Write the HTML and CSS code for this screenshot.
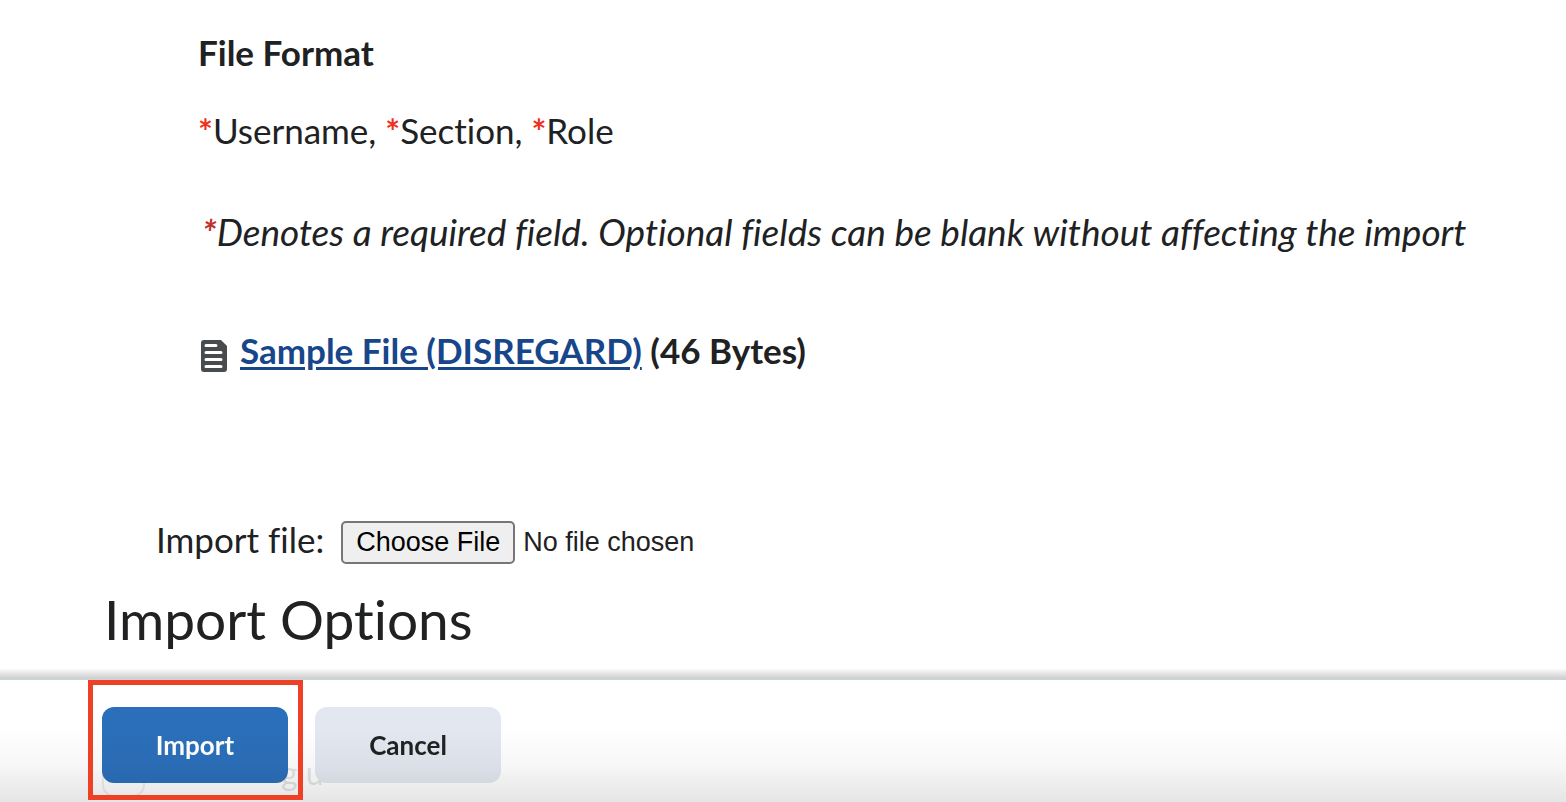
FILE: index.html
```html
<!doctype html>
<html lang="en">
  <head>
    <meta charset="utf-8">
    <meta name="viewport" content="width=device-width, initial-scale=1">
    <title>Import</title>
    <link rel="stylesheet" href="styles.css">
  </head>
  <body>
    <form class="page">
      <div class="format">
        <h3 class="format-title">File Format</h3>
        <p class="fields"><span class="req">*</span>Username, <span class="req">*</span>Section, <span class="req">*</span>Role</p>
        <p class="note"><em><span class="req req-dark">*</span>Denotes a required field. Optional fields can be blank without affecting the import</em></p>
        <div class="sample">
          <svg class="file-icon" width="26" height="32" viewBox="0 0 26 32" aria-hidden="true">
            <path fill="#494c4e" d="M3 0h17l6 6v23a3 3 0 0 1-3 3H3a3 3 0 0 1-3-3V3a3 3 0 0 1 3-3z"/>
            <path stroke="#fff" stroke-width="3" stroke-linecap="round" d="M5 5.500h10M5 12.500h15M5 19.500h15M5 26.500h15"/>
          </svg>
          <span><a href="#">Sample File (DISREGARD)</a> (46 Bytes)</span>
        </div>
      </div>

      <div class="import-row">
        <label for="file">Import file:</label>
        <input type="file" id="file" class="file-input">
      </div>

      <h2 class="options-title">Import Options</h2>
      <div class="option">
        <input type="checkbox" id="option" class="check">
        <label for="option">g u</label>
      </div>
    </form>

    <footer class="actions">
      <div class="marked">
        <button type="submit" class="btn btn-primary">Import</button>
      </div>
      <button type="button" class="btn">Cancel</button>
    </footer>
  </body>
</html>
```
FILE: styles.css
```css
body {
    margin: 0;
    height: 100vh;
    overflow: hidden;
    background-color: #fff;
    color: #202122;
    font-family: Lato, "Liberation Sans", sans-serif;
    font-size: 35px;
    font-variant-ligatures: none;
    line-height: 48px;
}
h2, h3, p {
    margin: 0;
}
.page {
    padding: 28px 24px 0 104px;
}
.format {
    padding-left: 94px;
}
.format-title {
    font-size: 35px;
    font-weight: 700;
}
.fields {
    margin-top: 30px;
}
.note {
    margin-top: 54px;
    padding-left: 4px;
    font-size: 37px;
}
.req {
    color: #f0301e;
    font-weight: 700;
}
.req-dark {
    color: #c1302a;
}
.sample {
    display: flex;
    align-items: center;
    gap: 13px;
    margin-top: 70px;
    padding-left: 3px;
    font-weight: 700;
}
.file-icon {
    flex: none;
    margin-top: 12px;
}
a {
    color: #17468a;
    text-decoration-thickness: 3px;
    text-underline-offset: 3px;
}
.import-row {
    display: flex;
    align-items: center;
    gap: 17px;
    margin-top: 140px;
    padding-left: 52px;
}
.file-input {
    flex: 1;
    min-width: 0;
    padding-top: 6px;
    color: #202122;
    font-family: "Liberation Sans", Arial, sans-serif;
    font-size: 27px;
    line-height: 44px;
}
.file-input::file-selector-button {
    height: 43px;
    margin: 0 8px 0 0;
    padding: 0 13px;
    border: 2px solid #767676;
    border-radius: 5px;
    background-color: #efefef;
    color: #000;
    font: inherit;
    line-height: 36px;
}
.options-title {
    margin-top: 20px;
    font-size: 55px;
    font-weight: 400;
    line-height: 70px;
}
.option {
    display: flex;
    align-items: center;
    gap: 136px;
    margin-top: 100px;
    margin-left: -2px;
}
.check {
    appearance: none;
    box-sizing: border-box;
    width: 43px;
    height: 43px;
    margin: 0;
    border: 2px solid #6e7376;
    border-radius: 12px;
}
.option label {
    margin-top: -6px;
    font-size: 32px;
}

/* sticky action bar over the form */
.actions {
    position: fixed;
    right: 0;
    bottom: 0;
    left: 0;
    display: flex;
    gap: 27px;
    padding: 27px 102px 19px;
    background-color: rgba(255, 255, 255, .88);
}
.actions::before {
    content: "";
    position: absolute;
    right: 0;
    bottom: 100%;
    left: 0;
    height: 10px;
    border-bottom: 2px solid #cbd3d6;
    background: linear-gradient(rgba(0, 0, 0, 0), rgba(0, 0, 0, .18)) padding-box;
}
.actions::after {
    content: "";
    position: absolute;
    right: 0;
    bottom: 0;
    left: 0;
    height: 76px;
    background: linear-gradient(rgba(0, 0, 0, 0), rgba(0, 0, 0, .03) 50%, rgba(0, 0, 0, .1));
    pointer-events: none;
}
.marked {
    position: relative;
    display: flex;
}
.marked::after {
    content: "";
    position: absolute;
    z-index: 1;
    top: -27px;
    right: -15px;
    bottom: -17px;
    left: -14px;
    border: 5px solid #ee4026;
    pointer-events: none;
}
.btn {
    width: 186px;
    height: 76px;
    padding: 0;
    border: 0;
    border-radius: 12px;
    background-color: #e3e8f0;
    color: #202122;
    font-family: inherit;
    font-size: 26px;
    font-weight: 700;
    cursor: pointer;
}
.btn-primary {
    background-color: #2b6fba;
    color: #fff;
}
```
